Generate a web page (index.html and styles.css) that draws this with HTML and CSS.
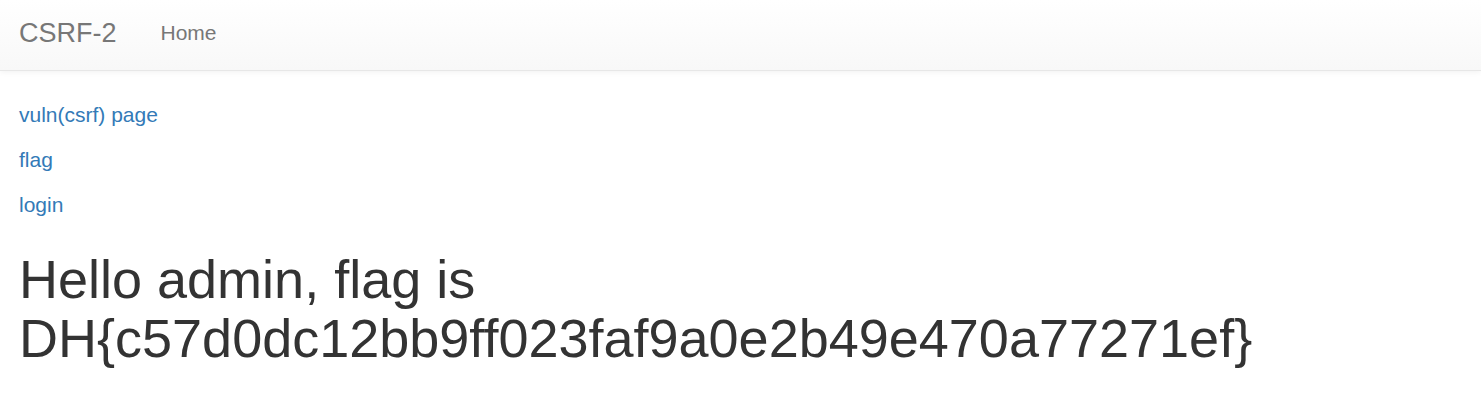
FILE: index.html
```html
<!DOCTYPE html>
<html lang="en">
<head>
  <meta charset="UTF-8" />
  <title>CSRF-2</title>
  <link rel="stylesheet" href="styles.css">
</head>
<body>

  <nav class="navbar">
    <a class="brand" href="#">CSRF-2</a>
    <a class="nav-link" href="#">Home</a>
  </nav>

  <div class="container">
    <p><a href="#">vuln(csrf) page</a></p>
    <p><a href="#">flag</a></p>
    <p><a href="#">login</a></p>
    <h1>Hello admin, flag is DH{c57d0dc12bb9ff023faf9a0e2b49e470a77271ef}</h1>
  </div>

</body>
</html>
```

FILE: styles.css
```css
body {
  margin: 0;
  font-family: "Liberation Sans", Arial, sans-serif;
  font-size: 21px;
  line-height: 30px;
  color: #333;
  background: #fff;
}

a {
  color: #337ab7;
  text-decoration: none;
}

.navbar {
  display: flex;
  align-items: flex-start;
  box-sizing: border-box;
  height: 71px;
  padding: 18px 19px 0;
  background: linear-gradient(to bottom, #fff 0, #f8f8f8 100%);
  border-bottom: 1px solid #e7e7e7;
  box-shadow: 0 1px 6px rgba(0, 0, 0, 0.06);
}

.brand {
  color: #777;
  font-size: 27px;
  line-height: 30px;
  margin-right: 44px;
}

.nav-link {
  color: #777;
  font-size: 21px;
  line-height: 30px;
}

.container {
  padding: 29px 19px;
}

.container p {
  margin: 0 0 15px;
}

.container h1 {
  margin: 30px 0 0;
  font-size: 54px;
  font-weight: 500;
  line-height: 1.1;
  max-width: 1300px;
}
```
